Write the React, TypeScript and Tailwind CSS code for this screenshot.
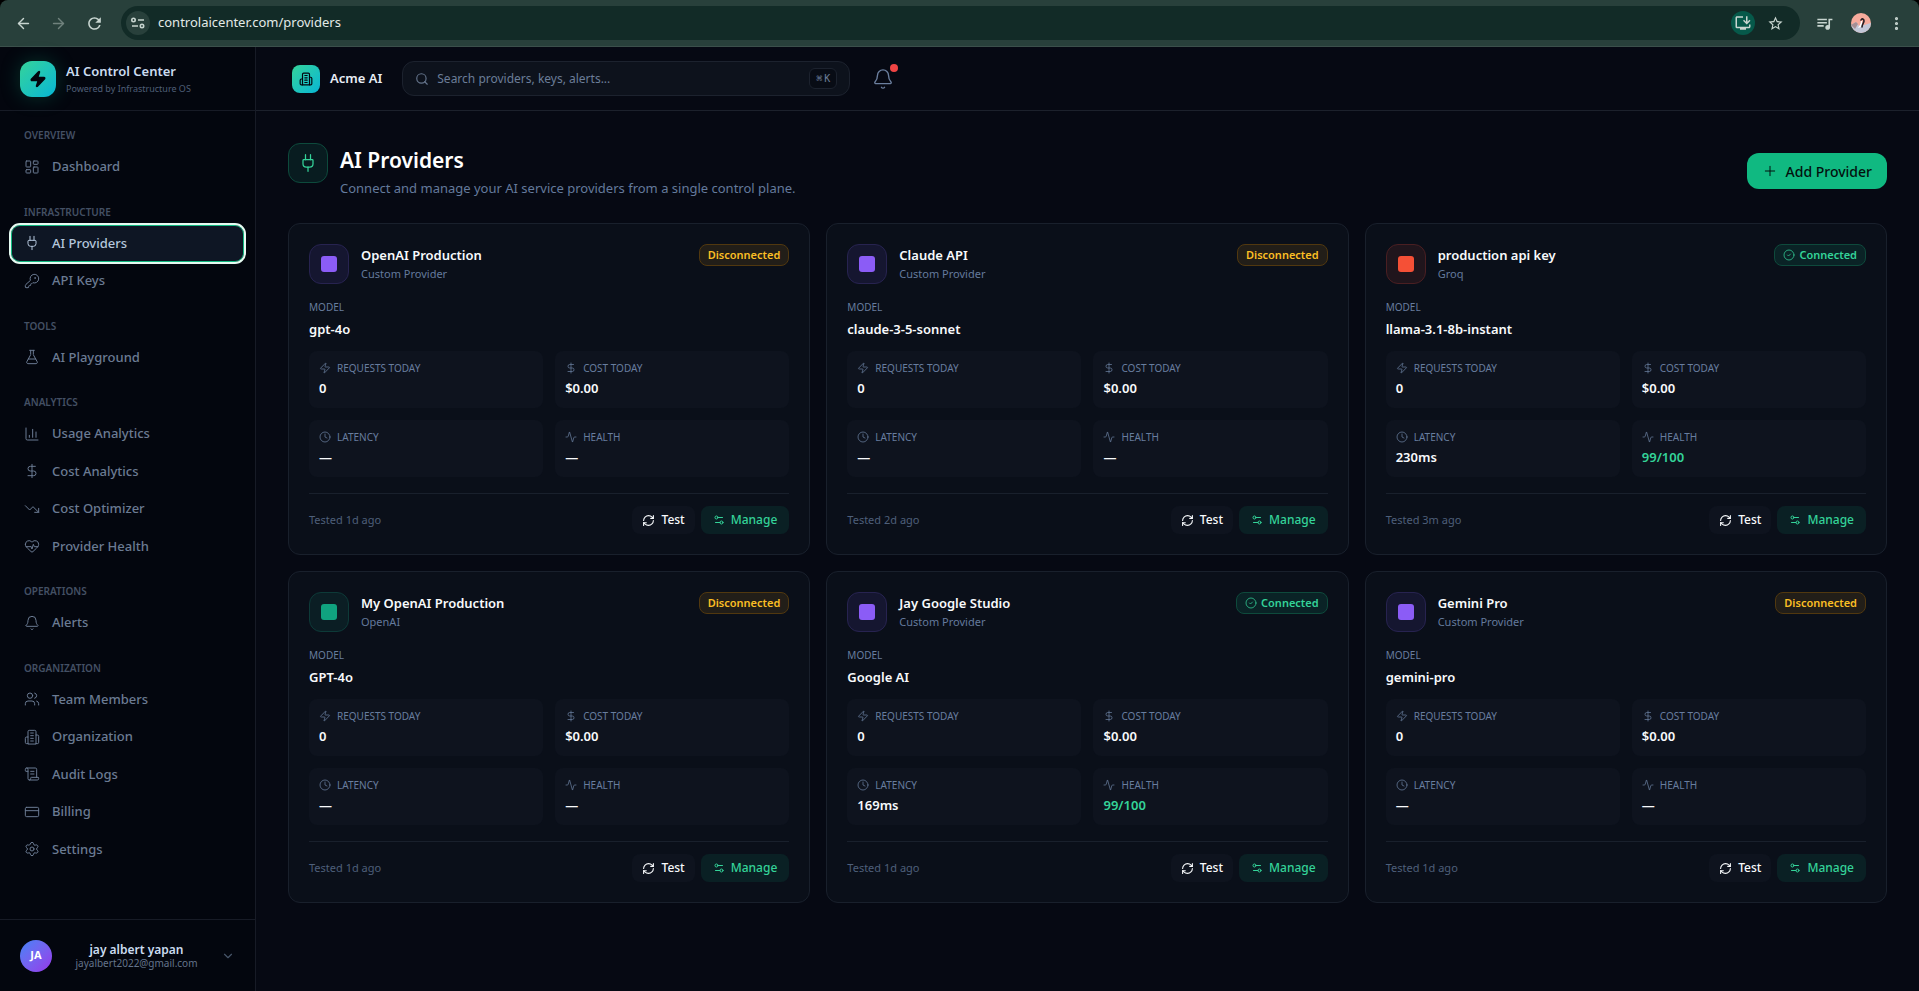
import React from 'react'
import {
  Activity,
  ArrowLeft,
  ArrowRight,
  Bell,
  ChartColumn,
  ChevronDown,
  CircleCheck,
  Clock,
  CreditCard,
  DollarSign,
  EllipsisVertical,
  FlaskConical,
  HeartPulse,
  KeyRound,
  LayoutDashboard,
  Plug,
  Plus,
  RefreshCw,
  ScrollText,
  Search,
  Settings,
  Settings2,
  TrendingDown,
  Users,
  Zap,
  type LucideIcon
} from 'lucide-react'
import { MdInstallDesktop, MdQueueMusic, MdRefresh, MdStarBorder } from 'react-icons/md'
import clsx from 'clsx'

interface IconProps {
  size?: number
  strokeWidth?: number
  className?: string
}

interface NavItem {
  label: string
  icon: React.ComponentType<IconProps>
  active?: boolean
}

interface NavSection {
  title: string
  items: NavItem[]
}

interface Provider {
  name: string
  vendor: string
  model: string
  tone: 'violet' | 'red' | 'green'
  connected: boolean
  latency: string
  health: string
  tested: string
}

const BuildingIcon: React.FC<IconProps> = ({ size = 16, strokeWidth = 2, className }) => (
  <svg
    width={size}
    height={size}
    viewBox="0 0 24 24"
    fill="none"
    stroke="currentColor"
    strokeWidth={strokeWidth}
    strokeLinecap="round"
    strokeLinejoin="round"
    className={className}
  >
    <path d="M6 22V4a2 2 0 0 1 2-2h8a2 2 0 0 1 2 2v18Z" />
    <path d="M6 12H4a2 2 0 0 0-2 2v6a2 2 0 0 0 2 2h2" />
    <path d="M18 9h2a2 2 0 0 1 2 2v9a2 2 0 0 1-2 2h-2" />
    <path d="M10 6h4M10 10h4M10 14h4M10 18h4" />
  </svg>
)

const navSections: NavSection[] = [
  { title: 'OVERVIEW', items: [{ label: 'Dashboard', icon: LayoutDashboard }] },
  {
    title: 'INFRASTRUCTURE',
    items: [
      { label: 'AI Providers', icon: Plug, active: true },
      { label: 'API Keys', icon: KeyRound }
    ]
  },
  { title: 'TOOLS', items: [{ label: 'AI Playground', icon: FlaskConical }] },
  {
    title: 'ANALYTICS',
    items: [
      { label: 'Usage Analytics', icon: ChartColumn },
      { label: 'Cost Analytics', icon: DollarSign },
      { label: 'Cost Optimizer', icon: TrendingDown },
      { label: 'Provider Health', icon: HeartPulse }
    ]
  },
  { title: 'OPERATIONS', items: [{ label: 'Alerts', icon: Bell }] },
  {
    title: 'ORGANIZATION',
    items: [
      { label: 'Team Members', icon: Users },
      { label: 'Organization', icon: BuildingIcon },
      { label: 'Audit Logs', icon: ScrollText },
      { label: 'Billing', icon: CreditCard },
      { label: 'Settings', icon: Settings }
    ]
  }
]

const providers: Provider[] = [
  { name: 'OpenAI Production', vendor: 'Custom Provider', model: 'gpt-4o', tone: 'violet', connected: false, latency: '—', health: '—', tested: '1d' },
  { name: 'Claude API', vendor: 'Custom Provider', model: 'claude-3-5-sonnet', tone: 'violet', connected: false, latency: '—', health: '—', tested: '2d' },
  { name: 'production api key', vendor: 'Groq', model: 'llama-3.1-8b-instant', tone: 'red', connected: true, latency: '230ms', health: '99/100', tested: '3m' },
  { name: 'My OpenAI Production', vendor: 'OpenAI', model: 'GPT-4o', tone: 'green', connected: false, latency: '—', health: '—', tested: '1d' },
  { name: 'Jay Google Studio', vendor: 'Custom Provider', model: 'Google AI', tone: 'violet', connected: true, latency: '169ms', health: '99/100', tested: '1d' },
  { name: 'Gemini Pro', vendor: 'Custom Provider', model: 'gemini-pro', tone: 'violet', connected: false, latency: '—', health: '—', tested: '1d' }
]

const toneBox = {
  violet: 'bg-[#151630] border-[#272350]',
  red: 'bg-[#20151c] border-[#4a1f22]',
  green: 'bg-[#0b1e24] border-[#0d3a38]'
}

const toneDot = {
  violet: 'bg-[#8b5cf6]',
  red: 'bg-[#f55036]',
  green: 'bg-[#10a37f]'
}

const BrowserBar: React.FC = () => (
  <div className="flex h-[47px] shrink-0 items-center rounded-t-lg border-b border-[#3b504b] bg-[#28403b] pr-[14px] text-[#c8d5d0]">
    <div className="flex w-[121px] items-center gap-[18px] pl-[15px]">
      <button aria-label="Back"><ArrowLeft size={17} /></button>
      <button aria-label="Forward" className="text-[#70827d]"><ArrowRight size={17} /></button>
      <button aria-label="Reload"><MdRefresh size={19} /></button>
    </div>
    <div className="flex h-[34px] flex-1 items-center rounded-full bg-[#122b27] pl-[5px] pr-4">
      <button aria-label="Site information" className="flex size-6 items-center justify-center rounded-full bg-[#28403b]">
        <svg width="14" height="12" viewBox="0 0 14 12" fill="none" stroke="currentColor" strokeWidth="1.6">
          <circle cx="2.5" cy="3" r="1.7" />
          <path d="M7 3h6M1 9h6" />
          <circle cx="11" cy="9" r="1.7" />
        </svg>
      </button>
      <input
        aria-label="Address"
        readOnly
        value="controlaicenter.com/providers"
        className="ml-2 flex-1 bg-transparent text-[13px] text-[#e2eae7] outline-none"
      />
      <button aria-label="Install app" className="flex size-6 items-center justify-center rounded-full bg-[#06594a]">
        <MdInstallDesktop size={18} />
      </button>
      <button aria-label="Bookmark" className="ml-3"><MdStarBorder size={17} /></button>
    </div>
    <div className="flex items-center gap-[17px] pl-[15px]">
      <button aria-label="Media"><MdQueueMusic size={19} /></button>
      <button aria-label="Profile" className="overflow-hidden rounded-full">
        <svg width="20" height="20" viewBox="0 0 20 20">
          <rect width="20" height="20" fill="#f6ab9c" />
          <path d="M0 12 5 9l3 4 5-1 7-2v10H0z" fill="#c3c8d8" />
          <path d="M0 12 5 9l2 2-3 5z" fill="#a58f94" />
          <path d="M10 8c0 3-2 5-3 7l3-1c2-2 1-4 1-6z" fill="#fff" />
          <path d="M10 7c1-2 3-1 3 1s-2 3-2 6" fill="none" stroke="#241c22" strokeWidth="1.6" strokeLinecap="round" />
        </svg>
      </button>
      <button aria-label="Menu"><EllipsisVertical size={17} strokeWidth={2.5} /></button>
    </div>
  </div>
)

const Sidebar: React.FC = () => (
  <aside className="flex w-64 shrink-0 flex-col border-r border-[#171b26] bg-[#03060e]">
    <div className="flex h-16 shrink-0 items-center gap-[10px] border-b border-[#171b26] px-5">
      <div className="flex size-9 items-center justify-center rounded-xl bg-gradient-to-br from-[#34d399] to-[#06b6d4] shadow-[0_0_20px_rgba(16,185,129,0.25)]">
        <Zap size={18} className="fill-[#03060e] text-[#03060e]" />
      </div>
      <div>
        <p className="text-[13px] leading-5 font-semibold text-[#cbdcf0]">AI Control Center</p>
        <p className="text-[9px] leading-4 text-[#4f5f77]">Powered by Infrastructure OS</p>
      </div>
    </div>
    <nav className="flex-1 space-y-5 px-3 py-[17px]">
      {navSections.map((section) => (
        <div key={section.title}>
          <h2 className="mb-[6px] px-3 text-[10px] leading-[15px] font-semibold text-[#435064]">{section.title}</h2>
          <ul className="space-y-0.5">
            {section.items.map(({ label, icon: Icon, active }) => (
              <li key={label}>
                <a
                  href="#"
                  className={clsx(
                    'flex items-center gap-3 rounded-lg px-3 py-2 text-[13px] leading-normal font-medium',
                    active
                      ? 'bg-[#0e1624] text-[#b4c6dc] ring-1 ring-[#10b981] outline-2 outline-offset-1 outline-[#e6fbf2]'
                      : 'text-[#6b7b93]'
                  )}
                >
                  <Icon size={16} strokeWidth={1.5} />
                  {label}
                </a>
              </li>
            ))}
          </ul>
        </div>
      ))}
    </nav>
    <button className="flex h-[72px] shrink-0 items-center border-t border-[#171b26] px-5">
      <span className="flex size-8 items-center justify-center rounded-full bg-gradient-to-br from-[#3b82f6] to-[#9333ea] text-[11px] font-bold text-white">
        JA
      </span>
      <span className="flex-1 text-center">
        <span className="block text-[12px] leading-[15px] font-semibold text-[#cbdcf0]">jay albert yapan</span>
        <span className="block text-[10px] leading-[13px] text-[#64748b]">jayalbert2022@gmail.com</span>
      </span>
      <ChevronDown size={14} className="text-[#475569]" />
    </button>
  </aside>
)

const TopBar: React.FC = () => (
  <header className="flex h-16 shrink-0 items-center border-b border-[#1c212c] pl-9">
    <button className="flex items-center gap-[10px] text-[13px] font-semibold text-[#e8eef6]">
      <span className="flex size-7 items-center justify-center rounded-lg bg-gradient-to-br from-[#34d399] to-[#06b6d4]">
        <BuildingIcon size={14} className="text-[#03060e]" />
      </span>
      Acme AI
    </button>
    <label className="ml-5 flex h-[35px] w-[448px] items-center gap-2 rounded-xl border border-[#1c222e] bg-[#0d121c] px-3">
      <Search size={14} className="text-[#64748b]" />
      <input
        type="text"
        aria-label="Search"
        placeholder="Search providers, keys, alerts..."
        className="min-w-0 flex-1 bg-transparent text-[12px] outline-none placeholder:text-[#6b7d98]"
      />
      <kbd className="flex h-[21px] items-center gap-0.5 rounded-md border border-[#1c222e] bg-[#080c15] px-[6px] font-['DejaVu_Sans_Mono',monospace] text-[10px] text-[#6b7d98]">
        <span>⌘</span>
        <span>K</span>
      </kbd>
    </label>
    <button aria-label="Notifications" className="relative ml-[18px] p-1 text-[#6b7f9e]">
      <Bell size={22} strokeWidth={1.5} />
      <span className="absolute top-0 right-0 size-2 rounded-full bg-[#ef4444]" />
    </button>
  </header>
)

interface StatProps {
  icon: LucideIcon
  label: string
  value: string
  highlight?: boolean
}

const Stat: React.FC<StatProps> = ({ icon: Icon, label, value, highlight }) => (
  <div className="rounded-lg bg-[#0e131e] px-[10px] pt-[7px] pb-[10px]">
    <dt className="flex items-center gap-[6px] text-[10px] leading-5 text-[#687d9e]">
      <Icon size={12} strokeWidth={1.5} />
      {label}
    </dt>
    <dd className={clsx('text-[13px] leading-5 font-semibold', highlight ? 'text-[#34d399]' : 'text-[#f8fafc]')}>{value}</dd>
  </div>
)

const ProviderCard: React.FC<{ provider: Provider }> = ({ provider }) => (
  <article className="rounded-xl border border-[#19202c] bg-[#0a0f19] p-5">
    <div className="flex items-start gap-3">
      <div className={clsx('flex size-10 items-center justify-center rounded-xl border', toneBox[provider.tone])}>
        <span className={clsx('size-4 rounded-[3px]', toneDot[provider.tone])} />
      </div>
      <div className="flex-1">
        <h3 className="text-[13px] leading-[22px] font-semibold text-[#f8fafc]">{provider.name}</h3>
        <p className="text-[11px] leading-4 text-[#647a9c]">{provider.vendor}</p>
      </div>
      {provider.connected ? (
        <span className="flex h-[22px] items-center gap-1 rounded-lg border border-[#0e4a3c] bg-[#0a2326] px-2 text-[11px] font-semibold text-[#34d399]">
          <CircleCheck size={12} strokeWidth={1.5} />
          Connected
        </span>
      ) : (
        <span className="flex h-[22px] items-center rounded-lg border border-[#51380f] bg-[#221e18] px-2 text-[11px] font-semibold text-[#fbbf24]">
          Disconnected
        </span>
      )}
    </div>
    <div className="mt-4">
      <p className="text-[10px] leading-[14px] text-[#687d9e]">MODEL</p>
      <p className="mt-1 text-[13px] leading-[22px] font-semibold text-[#f8fafc]">{provider.model}</p>
    </div>
    <dl className="mt-[11px] grid grid-cols-2 gap-3">
      <Stat icon={Zap} label="REQUESTS TODAY" value="0" />
      <Stat icon={DollarSign} label="COST TODAY" value="$0.00" />
      <Stat icon={Clock} label="LATENCY" value={provider.latency} />
      <Stat icon={Activity} label="HEALTH" value={provider.health} highlight={provider.connected} />
    </dl>
    <div className="mt-4 flex items-center gap-[6px] border-t border-[#19202c] pt-3">
      <p className="flex-1 text-[11px] text-[#4e5f7a]">Tested {provider.tested} ago</p>
      <button className="flex h-7 items-center gap-[6px] rounded-lg bg-[#0e131e] px-[10px] text-[12px] font-medium text-[#f8fafc]">
        <RefreshCw size={13} strokeWidth={2} />
        Test
      </button>
      <button className="flex h-7 items-center gap-[6px] rounded-lg bg-[#0a2024] px-3 text-[12px] font-medium text-[#34d399]">
        <Settings2 size={12} strokeWidth={2} />
        Manage
      </button>
    </div>
  </article>
)

const App: React.FC = () => {
  return (
    <div className="flex min-h-screen flex-col bg-black font-['Noto_Sans','Open_Sans',sans-serif]">
      <BrowserBar />
      <div className="flex flex-1 bg-[#060913]">
        <Sidebar />
        <div className="flex min-w-0 flex-1 flex-col">
          <TopBar />
          <main className="p-8">
            <div className="mb-6 flex items-start gap-3">
              <div className="flex size-10 items-center justify-center rounded-xl border border-[#0d4a3c] bg-[#081c20]">
                <Plug size={20} strokeWidth={1.5} className="text-[#34d399]" />
              </div>
              <div className="flex-1">
                <h1 className="text-[21px] leading-[35px] font-semibold text-white">AI Providers</h1>
                <p className="text-[13px] leading-[21px] text-[#647a9c]">Connect and manage your AI service providers from a single control plane.</p>
              </div>
              <button className="mt-[10px] flex h-9 items-center gap-2 rounded-xl bg-[#10b981] px-[15px] text-[14px] font-medium text-[#03110e]">
                <Plus size={16} strokeWidth={1.5} />
                Add Provider
              </button>
            </div>
            <div className="grid grid-cols-3 gap-4">
              {providers.map((provider) => (
                <ProviderCard key={provider.name} provider={provider} />
              ))}
            </div>
          </main>
        </div>
      </div>
    </div>
  )
}

export default App
